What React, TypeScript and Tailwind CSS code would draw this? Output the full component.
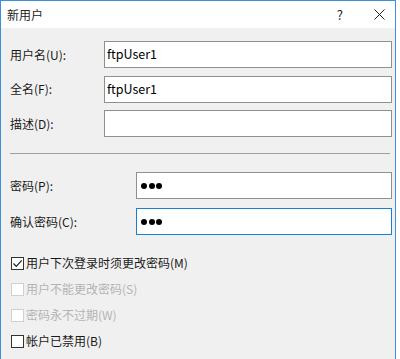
import React from "react";

const font = { fontFamily: '"Noto Sans CJK SC", "Noto Sans", sans-serif' };

function Field({ label, value, labelWidth, focused, password }: { label: string; value?: string; labelWidth: string; focused?: boolean; password?: boolean }) {
  return (
    <div className="flex items-center">
      <div className={`${labelWidth} shrink-0 text-[12px] text-[#1a1a1a]`}>{label}</div>
      <div
        className={`flex h-[27px] flex-1 items-center bg-white px-[2px] ${
          focused ? "border border-[#1a7fd0]" : "border border-[#8f8f8f]"
        }`}
      >
        {password ? (
          <div className="flex gap-[1.5px] pl-[2px]">
            <span className="h-[6px] w-[6px] rounded-full bg-black" />
            <span className="h-[6px] w-[6px] rounded-full bg-black" />
            <span className="h-[6px] w-[6px] rounded-full bg-black" />
          </div>
        ) : (
          <span className="text-[12.5px] text-black">{value}</span>
        )}
      </div>
    </div>
  );
}

function Check({ label, checked, disabled }: { label: string; checked?: boolean; disabled?: boolean }) {
  return (
    <div className="flex h-[26px] items-center gap-[2px]">
      <div
        className={`flex h-[13px] w-[13px] items-center justify-center border bg-white ${
          disabled ? "border-[#d0d0d0] bg-[#f4f4f4]" : "border-[#333]"
        }`}
      >
        {checked && (
          <svg width="11" height="11" viewBox="0 0 11 11">
            <path d="M1.5 5.5 L4.3 8.3 L9.7 2.3" fill="none" stroke="#222" strokeWidth="1.2" />
          </svg>
        )}
      </div>
      <span className={`text-[12px] ${disabled ? "text-[#b4b4b4]" : "text-[#1a1a1a]"}`}>{label}</span>
    </div>
  );
}

export default function App() {
  return (
    <div className="h-[359px] w-[400px] bg-white" style={font}>
      <div className="flex h-[359px] w-[396px] flex-col border-t border-l border-r border-[#3c8fd8] bg-[#f0f0f0]">
        <div className="flex h-[27px] items-center bg-white pl-[6px]">
          <span className="text-[12px] text-[#222]">新用户</span>
          <span className="ml-auto mr-[31px] text-[13px] text-[#222]">?</span>
          <svg className="mr-[10px]" width="11" height="11" viewBox="0 0 11 11">
            <path d="M0.5 0.5 L10.5 10.5 M10.5 0.5 L0.5 10.5" stroke="#222" strokeWidth="1" />
          </svg>
        </div>
        <div className="flex flex-col pl-[9px] pr-[3px]">
          <div className="mt-[13px] flex flex-col gap-[7.5px]">
            <Field label="用户名(U):" value="ftpUser1" labelWidth="w-[94px]" />
            <Field label="全名(F):" value="ftpUser1" labelWidth="w-[94px]" />
            <Field label="描述(D):" value="" labelWidth="w-[94px]" />
          </div>
          <div className="mt-[16px] mr-[2px] h-px bg-[#a0a0a0]" />
          <div className="mt-[18px] flex flex-col gap-[9px]">
            <Field label="密码(P):" labelWidth="w-[126px]" password />
            <Field label="确认密码(C):" labelWidth="w-[126px]" password focused />
          </div>
          <div className="mt-[15px] flex flex-col pl-[1px]">
            <Check label="用户下次登录时须更改密码(M)" checked />
            <Check label="用户不能更改密码(S)" disabled />
            <Check label="密码永不过期(W)" disabled />
            <Check label="帐户已禁用(B)" />
          </div>
        </div>
      </div>
    </div>
  );
}
